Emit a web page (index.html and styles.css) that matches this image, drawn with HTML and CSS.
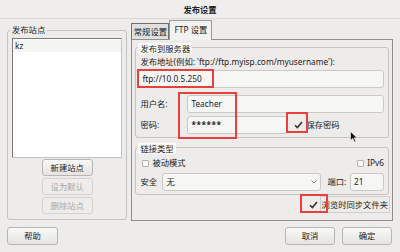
FILE: index.html
```html
<!DOCTYPE html>
<html lang="zh-CN">
<head>
  <meta charset="UTF-8" />
  <title>发布设置</title>
  <link rel="stylesheet" href="styles.css">
</head>
<body>

  <!-- 标题栏 -->
  <div class="titlebar">发布设置</div>

  <div class="main">
    <!-- 左侧站点列表 -->
    <div class="group sites">
      <div class="group-title">发布站点</div>
      <div class="site-list">
        <div class="site-item">kz</div>
      </div>
      <div class="site-buttons">
        <button class="btn">新建站点</button>
        <button class="btn" disabled>设为默认</button>
        <button class="btn" disabled>删除站点</button>
      </div>
    </div>

    <!-- 右侧标签页 -->
    <div class="tabs">
      <div class="tab-bar">
        <div class="tab">常规设置</div>
        <div class="tab active">FTP 设置</div>
      </div>
      <div class="tab-pane">
        <div class="group server">
          <div class="group-title boxed">发布到服务器</div>
          <div class="field-label">发布地址(例如: 'ftp://ftp.myisp.com/myusername'):</div>
          <div class="input wide">ftp://10.0.5.250</div>
          <div class="form-row user">
            <span class="row-label">用户名:</span>
            <div class="input grow">Teacher</div>
          </div>
          <div class="form-row pass">
            <span class="row-label">密码:</span>
            <div class="input pwd">******</div>
            <svg class="check-mark" width="9" height="8" viewBox="0 0 9 8"><path d="M1 4.2 L3.4 6.6 L8 1" fill="none" stroke="#333" stroke-width="1.6"/></svg>
            <span class="save-label">保存密码</span>
          </div>
        </div>

        <div class="group conn">
          <div class="group-title boxed">链接类型</div>
          <div class="opt-row">
            <span class="box"></span><span class="opt-label">被动模式</span>
            <span class="box ipv6"></span><span class="opt-label">IPv6</span>
          </div>
          <div class="sec-row">
            <span class="row-label short">安全</span>
            <div class="combo">无
              <svg class="combo-arrow" width="6" height="4" viewBox="0 0 6 4"><path d="M0.5 0.5 L3 3 L5.5 0.5" fill="none" stroke="#888" stroke-width="1"/></svg>
            </div>
            <span class="port-label">端口:</span>
            <div class="input port">21</div>
          </div>
        </div>

        <div class="sync-row">
          <svg class="check-mark" width="9" height="8" viewBox="0 0 9 8"><path d="M1 4.2 L3.4 6.6 L8 1" fill="none" stroke="#333" stroke-width="1.6"/></svg>
          <span class="sync-label">浏览时同步文件夹</span>
        </div>
      </div>
    </div>
  </div>

  <!-- 底部按钮 -->
  <div class="footer">
    <button class="btn wide-btn help">帮助</button>
    <button class="btn wide-btn">取消</button>
    <button class="btn wide-btn">确定</button>
  </div>

  <!-- 红色标注框 -->
  <div class="mark mark-ftp"></div>
  <div class="mark mark-user"></div>
  <div class="mark mark-save"></div>
  <div class="mark mark-sync"></div>

  <svg class="cursor" width="8" height="12" viewBox="0 0 8 12"><path d="M0.5 0.5 L0.5 9.5 L2.8 7.4 L4.4 11 L5.8 10.4 L4.2 6.9 L7.2 6.9 Z" fill="#111" stroke="#fff" stroke-width="0.6"/></svg>

</body>
</html>
```

FILE: styles.css
```css
* {
  margin: 0;
  padding: 0;
  box-sizing: border-box;
}

body {
  width: 400px;
  height: 252px;
  overflow: hidden;
  position: relative;
  background: #edecea;
  color: #222;
  font: 8.3px/10px "Noto Sans", "Noto Sans CJK SC", sans-serif;
}

.titlebar {
  height: 19px;
  line-height: 19px;
  text-align: center;
  font-weight: bold;
  background: #efeeec;
  border-bottom: 1px solid #d9d8d6;
}

.main {
  display: flex;
  gap: 4px;
  padding: 1px 7px 0 7px;
}

/* 分组框 */
.group {
  border: 1px solid #c4c3c1;
  border-radius: 3px;
  display: flex;
  flex-direction: column;
}

.group-title {
  align-self: flex-start;
  line-height: 10px;
  margin-top: -6px;
  padding: 0 2px;
  background: #edecea;
}

.group-title.boxed {
  background: #fafaf9;
  line-height: 11px;
  margin-top: -5px;
}

.sites {
  width: 121px;
  height: 190px;
  margin-top: 10px;
  padding: 0 4px;
}

.sites .group-title {
  margin-left: -2px;
}

.site-list {
  margin-top: 3px;
  height: 120px;
  background: #fff;
  border: 1px solid #c2c2c0;
  border-left-color: #7c7c7a;
  border-top-color: #7c7c7a;
}

.site-item {
  margin-top: 1px;
  height: 12px;
  line-height: 12px;
  padding-left: 2px;
  background: #f4f4f3;
}

.site-buttons {
  display: flex;
  flex-direction: column;
  align-items: center;
  gap: 2px;
  margin-top: 1px;
}

.btn {
  width: 51px;
  height: 17px;
  border: 1px solid #b7b6b4;
  border-radius: 3px;
  background: linear-gradient(#f8f8f7, #e5e4e2);
  font: inherit;
  line-height: 15px;
  color: #222;
  text-align: center;
}

.btn:disabled {
  color: #aaa9a7;
  border-color: #d3d2d0;
  background: #eeedeb;
}

/* 标签页 */
.tabs {
  width: 263px;
  display: flex;
  flex-direction: column;
}

.tab-bar {
  display: flex;
  align-items: flex-end;
  height: 19px;
}

.tab {
  width: 38px;
  height: 16px;
  line-height: 15px;
  text-align: center;
  white-space: nowrap;
  border: 1px solid #6f6f6d;
  border-bottom: none;
  background: #e1e0de;
}

.tab.active {
  width: 43px;
  height: 20px;
  line-height: 18px;
  margin-bottom: -1px;
  border-color: #9a9997;
  background: #f2f2f1;
  position: relative;
  z-index: 1;
}

.tab-pane {
  height: 182px;
  border: 1px solid #8f8e8c;
  padding: 7px 3px 0 3px;
  display: flex;
  flex-direction: column;
}

.server {
  height: 91px;
  padding: 0 4px 3px 2px;
}

.field-label {
  margin-top: 3px;
  padding-left: 2px;
  white-space: nowrap;
}

.input {
  height: 18px;
  line-height: 16px;
  padding-left: 3px;
  border: 1px solid #cac9c7;
  border-radius: 3px;
  background: #f6f6f5;
}

.input.wide {
  margin-top: 3px;
}

.form-row {
  display: flex;
  align-items: center;
}

.form-row.user {
  margin-top: 7px;
}

.form-row.pass {
  margin-top: 3px;
}

.row-label {
  width: 49px;
  padding-left: 2px;
}

.input.grow {
  flex: 1;
}

.input.pwd {
  width: 101px;
  font-weight: bold;
  letter-spacing: 0.5px;
}

.check-mark {
  margin-left: 6px;
  display: block;
}

.save-label {
  margin-left: 3px;
}

.conn {
  height: 48px;
  margin-top: 9px;
  padding: 0 4px 3px 2px;
}

.opt-row {
  display: flex;
  align-items: center;
  height: 10px;
  margin-top: 4px;
}

.box {
  width: 7px;
  height: 7px;
  margin-left: 4px;
  border: 1px solid #b4b3b1;
  border-radius: 1px;
  background: #f8f8f7;
}

.box.ipv6 {
  margin-left: auto;
}

.opt-label {
  margin-left: 3px;
}

.sec-row {
  display: flex;
  align-items: center;
  margin-top: 5px;
}

.row-label.short {
  width: 24px;
}

.combo {
  width: 159px;
  height: 18px;
  line-height: 16px;
  padding-left: 3px;
  border: 1px solid #cac9c7;
  border-radius: 3px;
  background: #f6f6f5;
  display: flex;
  justify-content: space-between;
  align-items: center;
}

.combo-arrow {
  margin-right: 3px;
}

.port-label {
  margin-left: 6px;
}

.input.port {
  width: 34px;
  margin-left: auto;
}

.sync-row {
  display: flex;
  justify-content: flex-end;
  align-items: center;
  height: 17px;
  margin-top: 1px;
  margin-right: -1px;
}

.sync-row .check-mark {
  margin-right: 2px;
}

.sync-label {
  height: 17px;
  line-height: 15px;
  padding: 0 1px;
  border: 1px solid #cfcecc;
}

/* 底部 */
.footer {
  display: flex;
  gap: 7px;
  margin-top: 6px;
  padding: 0 8px 0 7px;
}

.wide-btn {
  width: 50px;
  height: 18px;
  line-height: 16px;
}

.wide-btn.help {
  width: 51px;
  margin-right: auto;
}

/* 红色标注 */
.mark {
  position: absolute;
  border: 2px solid #e8403c;
}

.mark-ftp { left: 137px; top: 69px; width: 77px; height: 19px; }
.mark-user { left: 178px; top: 92px; width: 59px; height: 47px; }
.mark-save { left: 286px; top: 112px; width: 22px; height: 21px; }
.mark-sync { left: 300px; top: 194px; width: 28px; height: 19px; }

.cursor {
  position: absolute;
  left: 350px;
  top: 131px;
}
```
